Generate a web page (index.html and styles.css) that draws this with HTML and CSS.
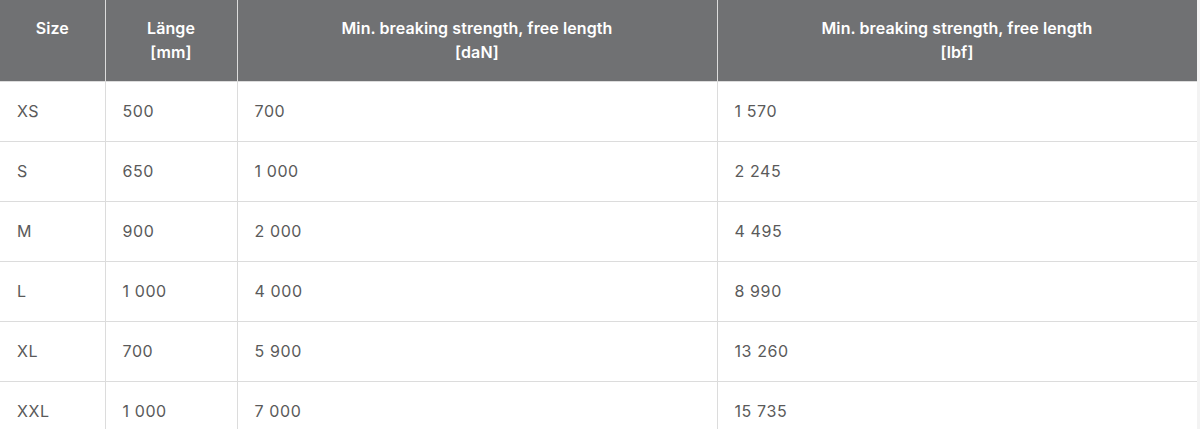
FILE: index.html
```html
<!DOCTYPE html>
<html lang="en">
<head>
<meta charset="utf-8">
<link rel="stylesheet" href="styles.css">
</head>
<body>
<div class="page">
<table class="spec">
  <colgroup>
    <col class="c1"><col class="c2"><col class="c3"><col class="c4">
  </colgroup>
  <thead>
    <tr>
      <th>Size</th>
      <th>Länge<br>[mm]</th>
      <th>Min. breaking strength, free length<br>[daN]</th>
      <th>Min. breaking strength, free length<br>[lbf]</th>
    </tr>
  </thead>
  <tbody>
    <tr><td>XS</td><td>500</td><td>700</td><td>1 570</td></tr>
    <tr><td>S</td><td>650</td><td>1 000</td><td>2 245</td></tr>
    <tr><td>M</td><td>900</td><td>2 000</td><td>4 495</td></tr>
    <tr><td>L</td><td>1 000</td><td>4 000</td><td>8 990</td></tr>
    <tr><td>XL</td><td>700</td><td>5 900</td><td>13 260</td></tr>
    <tr><td>XXL</td><td>1 000</td><td>7 000</td><td>15 735</td></tr>
  </tbody>
</table>
</div>
</body>
</html>
```

FILE: styles.css
```css
html, body {
  margin: 0;
  padding: 0;
  background: #f3f3f3;
}
.page {
  width: 1197px;
  background: #ffffff;
  overflow: hidden;
  height: 429px;
}
.spec {
  width: 1197px;
  table-layout: fixed;
  border-collapse: collapse;
  font-family: Inter, "Liberation Sans", sans-serif;
  font-size: 16px;
}
.c1 { width: 105px; }
.c2 { width: 132px; }
.c3 { width: 480px; }
.c4 { width: 480px; }
.spec th {
  background: #707173;
  color: #ffffff;
  font-weight: 600;
  line-height: 24px;
  height: 81px;
  padding: 16px 10px 0;
  box-sizing: border-box;
  text-align: center;
  vertical-align: top;
  letter-spacing: 0.1px;
  border-right: 1px solid #dcdcdc;
  border-bottom: 1px solid #dcdcdc;
}
.spec td {
  color: #5a5a5a;
  font-weight: 400;
  height: 59px;
  padding: 0 0 0 17px;
  line-height: 20px;
  letter-spacing: 0.6px;
  vertical-align: middle;
  border-right: 1px solid #dcdcdc;
  border-bottom: 1px solid #dcdcdc;
}
```
